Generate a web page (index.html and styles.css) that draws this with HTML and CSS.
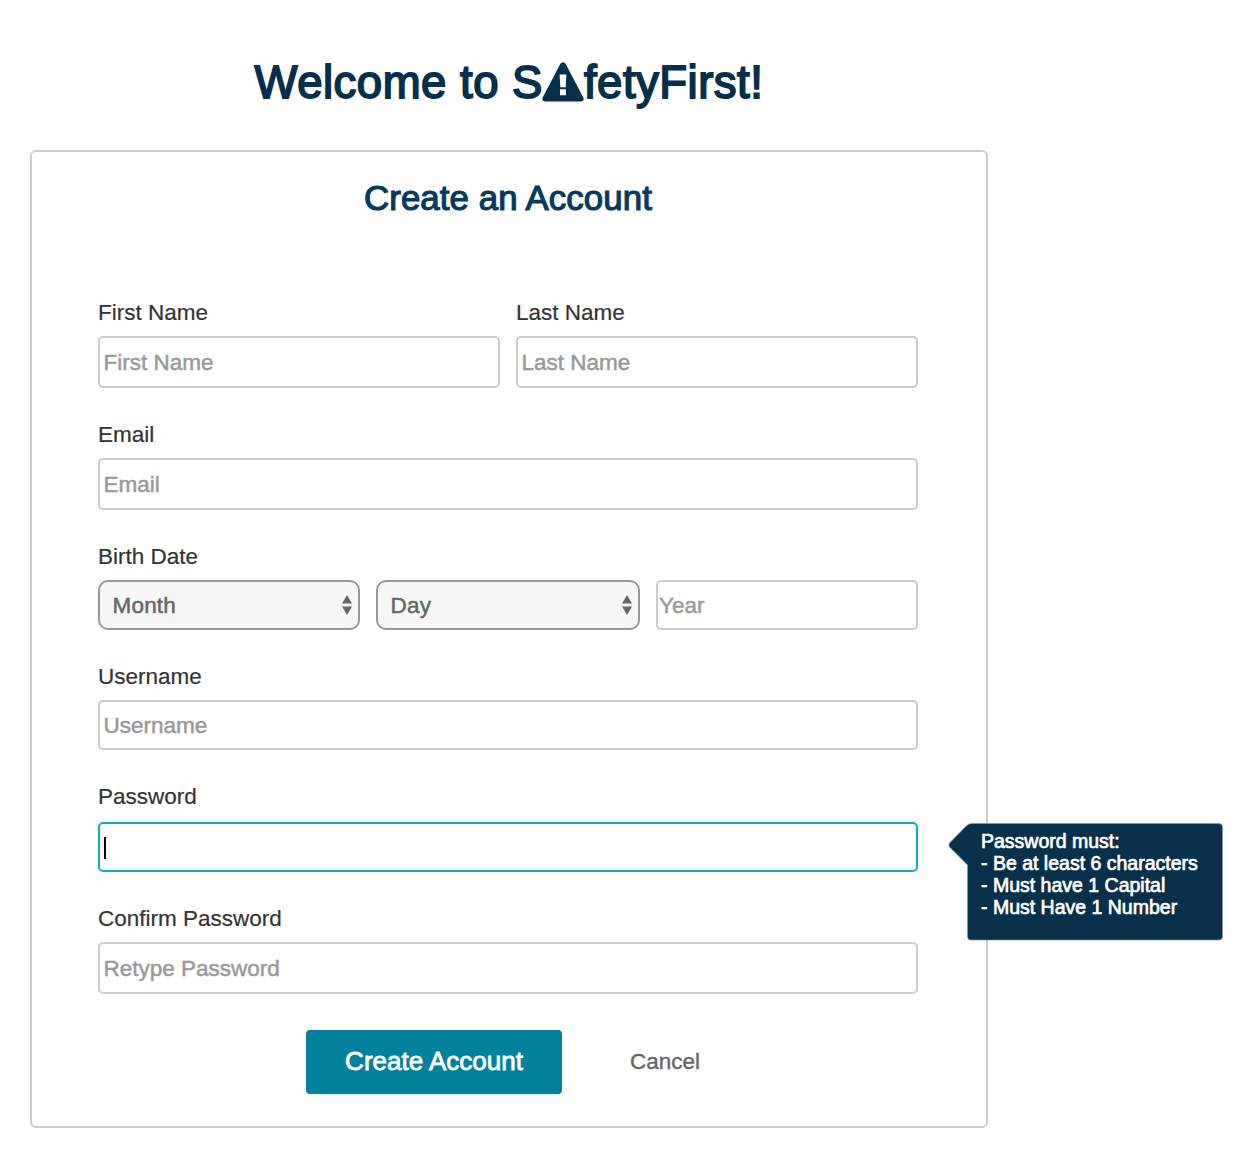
FILE: index.html
```html
<!DOCTYPE html>
<html lang="en">
<head>
<meta charset="utf-8">
<title>SafetyFirst</title>
<link rel="stylesheet" href="styles.css">
</head>
<body>
<main class="page">
  <h1 class="brand"><span>Welcome to S</span><svg class="brand-icon" width="42" height="40" viewBox="0 0 42 40"><path fill="currentColor" fill-rule="evenodd" d="M18.4 1.7Q21 -1.3 23.6 1.7L41.3 35.5Q42.6 39.3 39 39.5H3Q-.6 39.3.7 35.5ZM17.6 12.4L18.3 25.2H23.7L24.4 12.4ZM18 27.3V33.3H24V27.3Z"/></svg><span>fetyFirst!</span></h1>
  <form class="card">
    <h2 class="title">Create an Account</h2>
    <div class="row">
      <label class="field"><span class="label">First Name</span><input class="input" type="text" placeholder="First Name"></label>
      <label class="field"><span class="label">Last Name</span><input class="input" type="text" placeholder="Last Name"></label>
    </div>
    <label class="field"><span class="label">Email</span><input class="input" type="email" placeholder="Email"></label>
    <div class="field">
      <span class="label">Birth Date</span>
      <div class="birth">
        <div class="select"><span>Month</span><svg width="10" height="20" viewBox="0 0 10 20"><path fill="#666" d="M5 0L10 8.5H0ZM0 11.5H10L5 20Z"/></svg></div>
        <div class="select"><span>Day</span><svg width="10" height="20" viewBox="0 0 10 20"><path fill="#666" d="M5 0L10 8.5H0ZM0 11.5H10L5 20Z"/></svg></div>
        <input class="input input-short input-year" type="text" placeholder="Year">
      </div>
    </div>
    <label class="field"><span class="label">Username</span><input class="input input-short" type="text" placeholder="Username"></label>
    <div class="field">
      <span class="label label-tall">Password</span>
      <div class="input input-short input-active">
        <span class="caret"></span>
        <div class="tooltip">
          <svg class="tooltip-shape" width="276" height="119" viewBox="0 0 276 119"><path fill="#08304a" stroke="#8397a4" stroke-width=".7" d="M24 .5H271Q274.500 .5 274.500 4V113.500Q274.500 117 271 117H23Q19.500 117 19.500 113.500V42L2 24.500Q-.3 22 2 19.500L18 3.200Q20.500 .5 24 .5Z"/></svg>
          <p class="tooltip-text">Password must:<br>- Be at least 6 characters<br>- Must have 1 Capital<br>- Must Have 1 Number</p>
        </div>
      </div>
    </div>
    <label class="field"><span class="label">Confirm Password</span><input class="input" type="password" placeholder="Retype Password"></label>
    <div class="actions">
      <button class="submit" type="button">Create Account</button>
      <a class="cancel">Cancel</a>
    </div>
  </form>
</main>
</body>
</html>
```
FILE: styles.css
```css
* { box-sizing: border-box; }
body {
  margin: 0;
  background: #fff;
  color: #333;
  font-family: "Liberation Sans", Arial, sans-serif;
  font-size: 22.5px;
}
.page { width: 958px; margin: 0 0 0 30px; padding-top: 53px; }
.brand {
  display: flex;
  justify-content: center;
  margin: 0 0 37px;
  height: 60px;
  line-height: 60px;
  font-size: 45.5px;
  font-weight: 400;
  letter-spacing: .5px;
  color: #062f4b;
  -webkit-text-stroke: 1.8px #062f4b;
}
.brand-icon { margin: 9px 0 0 -1px; -webkit-text-stroke: 0; }
.card {
  height: 978px;
  padding: 24px 68px 0 66px;
  border: 2px solid #ccc;
  border-radius: 6px;
}
.title {
  margin: 0 0 76px;
  height: 44px;
  line-height: 44px;
  font-size: 34.8px;
  font-weight: 400;
  letter-spacing: .1px;
  text-align: center;
  color: #053a5c;
  -webkit-text-stroke: 1.2px #053a5c;
}
.row { display: grid; grid-template-columns: 1fr 1fr; gap: 16px; }
.field { display: flex; flex-direction: column; margin-bottom: 30px; }
.label { height: 40px; line-height: 34px; -webkit-text-stroke: .2px #333; }
.label-tall { height: 42px; }
.input {
  width: 100%;
  height: 52px;
  padding: 1px 4px 0 3.5px;
  border: 2px solid #ccc;
  border-radius: 5px;
  background: #fff;
  color: #333;
  font: inherit;
  outline: none;
}
.input::placeholder { color: #999; opacity: 1; -webkit-text-stroke: .5px #999; }
.input-short { height: 50px; padding-top: 2px; }
.input-year { padding-left: 1px; }
.input-active { position: relative; display: flex; align-items: center; border-color: #13adbb; }
.caret { width: 2px; height: 22px; background: #000; }
.birth { display: grid; grid-template-columns: 262px 264px 262px; gap: 16px; }
.select {
  display: flex;
  align-items: center;
  justify-content: space-between;
  height: 50px;
  padding: 0 6px 0 12.5px;
  border: 2px solid #999;
  border-radius: 10px;
  background: #f7f7f7;
  color: #666;
  -webkit-text-stroke: .5px #666;
}
.select span { padding-top: 2px; letter-spacing: .2px; }
.tooltip { position: absolute; left: 848px; top: -1px; width: 276px; height: 119px; }
.tooltip-shape { display: block; }
.tooltip-text {
  position: absolute;
  left: 33px;
  top: 7px;
  margin: 0;
  font-size: 19.5px;
  line-height: 22px;
  white-space: nowrap;
  color: #fff;
  -webkit-text-stroke: .7px #fff;
}
.actions { display: flex; align-items: center; margin: 36px 0 0 208px; gap: 68px; }
.submit {
  width: 256px;
  height: 64px;
  padding: 0 0 2px;
  border: 0;
  border-radius: 4px;
  background: #00829d;
  color: #fff;
  font: inherit;
  font-size: 26px;
  -webkit-text-stroke: .8px #fff;
}
.cancel { color: #666; -webkit-text-stroke: .4px #666; }
```
